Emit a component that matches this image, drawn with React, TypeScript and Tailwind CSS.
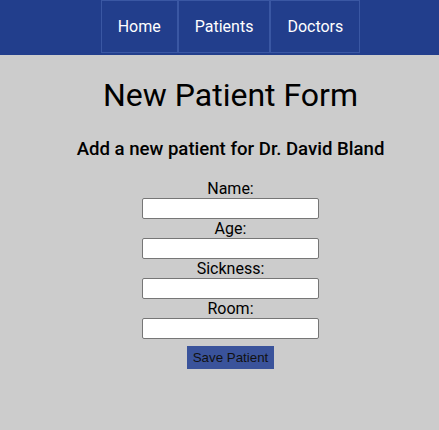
export default function App() {
  const fields = ["Name:", "Age:", "Sickness:", "Room:"];
  return (
    <div className="min-h-[430px] bg-[#cccccc] pl-[22px] font-['Roboto',sans-serif] text-black">
      <nav className="-ml-[22px] flex h-[55px] justify-center bg-[#223e8c] pl-[22px]">
        <div className="flex h-[53px]">
          {["Home", "Patients", "Doctors"].map((item) => (
            <a
              key={item}
              href="#"
              className="flex items-center border border-[#3a57a3] px-[16px] text-[16px] text-white"
            >
              {item}
            </a>
          ))}
        </div>
      </nav>

      <main className="flex flex-col items-center">
        <h1 className="mt-[21px] text-[32px] leading-[38px]">New Patient Form</h1>
        <h3 className="mt-[23px] text-[18.6px] font-medium leading-[24px]">
          Add a new patient for Dr. David Bland
        </h3>

        <form className="mt-[18px] flex flex-col items-center">
          {fields.map((label) => (
            <label key={label} className="flex flex-col items-center text-[16px] leading-[19px]">
              {label}
              <input
                type="text"
                className="h-[21px] w-[177px] rounded-[2px] border border-[#767676] bg-white"
              />
            </label>
          ))}
          <button
            type="button"
            className="mt-[7px] h-[23px] bg-[#3a539b] px-[6px] font-['Liberation_Sans',sans-serif] text-[13.333px] text-[#111]"
          >
            Save Patient
          </button>
        </form>
      </main>
    </div>
  );
}
